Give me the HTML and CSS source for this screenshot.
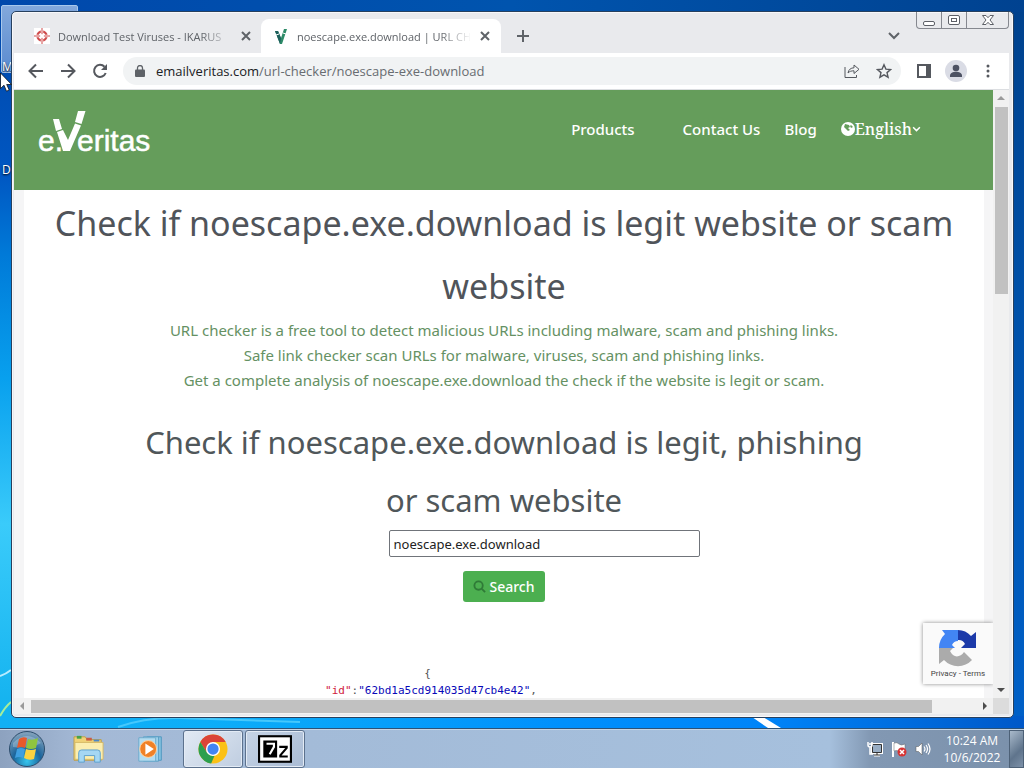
FILE: index.html
```
<!DOCTYPE html>
<html lang="en">
<head>
    <meta charset="UTF-8">
    <title>noescape.exe.download | URL Checker</title>
    <link rel="stylesheet" href="styles.css">
</head>
<body>
    <!-- Desktop -->
    <div class="desktop">
        <div class="desktop-icon"></div>
        <span class="icon-label label-m">M</span>
        <span class="icon-label label-d">D</span>
        <svg class="streaks" viewBox="0 0 1024 228" preserveAspectRatio="none" aria-hidden="true">
            <path d="M0 176Q6 174 11 170" stroke="#b8ecff" stroke-width="2" fill="none"/>
            <path d="M0 216Q5 207 11 202" stroke="#a5ee9c" stroke-width="2" fill="none"/>
            <path d="M118 227Q145 217 180 218T300 222" stroke="#46c8fc" stroke-width="2" fill="none"/>
            <path d="M752 217h11l18 11h-13z" fill="#fff"/>
        </svg>

        <!-- Browser window -->
        <div class="window">
            <div class="tab-strip">
                <div class="tab">
                    <svg class="favicon" viewBox="0 0 16 16"><rect width="16" height="16" fill="#fff"/><circle cx="8" cy="8" r="4.5" fill="none" stroke="#cf4a4a" stroke-width="2.4"/><path d="M8 0v16M0 8h16" stroke="#fff" stroke-width="2.4"/><path d="M8 0v16M0 8h16" stroke="#cf4a4a"/><circle cx="8" cy="8" r="2" fill="#fff"/></svg>
                    <span class="tab-title">Download Test Viruses - IKARUS</span>
                    <button class="close" aria-label="Close tab"><svg viewBox="0 0 10 10"><path d="M1 1l8 8M9 1l-8 8"/></svg></button>
                </div>
                <div class="tab active">
                    <svg class="favicon" viewBox="0 0 16 16"><path d="M2 3h3l3 7 3-9h3L9 16H7z" fill="#2e8b68"/><path d="M2 3h3l3 7-1 6z" fill="#1e5f5c"/><path d="M3 7l3-1M10 5l3 1" stroke="#fff"/></svg>
                    <span class="tab-title">noescape.exe.download | URL CH</span>
                    <button class="close" aria-label="Close tab"><svg viewBox="0 0 10 10"><path d="M1 1l8 8M9 1l-8 8"/></svg></button>
                </div>
                <button class="new-tab" aria-label="New tab"><svg viewBox="0 0 12 12"><path d="M6 0v12M0 6h12"/></svg></button>
                <div class="strip-right">
                    <button class="tab-search" aria-label="Search tabs"><svg viewBox="0 0 12 8"><path d="M1 1l5 5 5-5"/></svg></button>
                    <div class="window-buttons">
                        <button aria-label="Minimize"><svg viewBox="0 0 12 12"><rect x=".5" y="7.5" width="11" height="4" rx="1.5"/></svg></button>
                        <button aria-label="Maximize"><svg viewBox="0 0 12 12"><rect x=".5" y="1.5" width="11" height="9" rx="1.5"/><rect x="3.5" y="4.5" width="5" height="3"/></svg></button>
                        <button class="wide" aria-label="Close"><svg viewBox="0 0 12 12"><path d="M.5 1.5H4l2 2.2 2-2.2h3.500L8 6l3.500 4.500H8L6 8.300 4 10.500H.5L4 6z"/></svg></button>
                    </div>
                </div>
            </div>

            <div class="toolbar">
                <button class="tool" aria-label="Back"><svg viewBox="0 0 16 16"><path d="M15 8H2M8 1.500L1.500 8 8 14.500"/></svg></button>
                <button class="tool" aria-label="Forward"><svg viewBox="0 0 16 16"><path d="M1 8h13M8 1.500L14.500 8 8 14.500"/></svg></button>
                <button class="tool" aria-label="Reload"><svg viewBox="0 0 16 16"><path d="M13.700 10A6 6 0 1 1 12.500 3.800"/><path d="M15 1v6H9z" class="fill"/></svg></button>
                <div class="address">
                    <svg class="lock" viewBox="0 0 10 12"><rect y="4.500" width="10" height="7.500" rx="1"/><path d="M2.500 5V3a2.500 2.500 0 0 1 5 0v2" fill="none" stroke="#5f6368" stroke-width="1.300"/></svg>
                    <a class="url" href="#"><b>emailveritas.com</b>/url-checker/noescape-exe-download</a>
                    <button class="tool share" aria-label="Share"><svg viewBox="0 0 16 16"><path d="M1 4v10.500h11.500V12M4 10c.5-3.500 3-5.200 6-5.200V2l5 4.300-5 4.200V7.800C7.500 7.800 5.500 8.300 4 10z"/></svg></button>
                    <button class="tool star" aria-label="Bookmark"><svg viewBox="0 0 16 16"><path d="M8 1.800l1.900 4.300 4.700.4-3.600 3.100 1.100 4.600L8 11.800l-4.100 2.400L5 9.600 1.400 6.500l4.700-.4z"/></svg></button>
                </div>
                <button class="tool panel" aria-label="Side panel"><svg viewBox="0 0 16 16"><path d="M2 2h12v12H2z"/><path d="M10 2h4.500v12H10z" class="fill"/></svg></button>
                <button class="tool profile" aria-label="Profile"><svg viewBox="0 0 22 22"><circle cx="11" cy="11" r="11" fill="#dadce5"/><circle cx="11" cy="8" r="3.300" fill="#4d5263"/><path d="M5 17v-1.500c0-2.500 3-3.800 6-3.800s6 1.300 6 3.800V17z" fill="#4d5263"/></svg></button>
                <button class="tool" aria-label="Menu"><svg viewBox="0 0 16 16" class="dots"><circle cx="8" cy="3" r="1.500"/><circle cx="8" cy="8" r="1.500"/><circle cx="8" cy="13" r="1.500"/></svg></button>
            </div>

            <!-- Web page -->
            <div class="view">
                <div class="page">
                    <div class="header">
                        <a class="logo" href="#" aria-label="e.Veritas">
                            <svg viewBox="0 0 120 56">
                                <text x="0" y="41">e.</text>
                                <text x="39" y="41">eritas</text>
                                <path d="M15 9h6l3 10-6 2zM40 1h7.500l-4 13-6.500-2zM19 22l6-2 5 10 7-16.500 6 2L32 41h-7z"/>
                            </svg>
                        </a>
                        <nav class="nav">
                            <a class="products" href="#">Products</a>
                            <a href="#">Contact Us</a>
                            <a href="#">Blog</a>
                            <a class="language" href="#"><svg class="globe" viewBox="0 0 14 14"><circle cx="7" cy="7" r="7" fill="#fff"/><path d="M4 2l4 1 1 2-2 1 2 2-2 1-2-2-2-2zM10 3l2 2-2 1-1-2z" fill="#659d5b"/></svg>English<svg class="chevron" viewBox="0 0 8 6"><path d="M1 1l3 3 3-3"/></svg></a>
                        </nav>
                    </div>
                    <div class="content">
                        <h1>Check if noescape.exe.download is legit website or scam website</h1>
                        <p>URL checker is a free tool to detect malicious URLs including malware, scam and phishing links.<br>
                        Safe link checker scan URLs for malware, viruses, scam and phishing links.<br>
                        Get a complete analysis of noescape.exe.download the check if the website is legit or scam.</p>
                        <h2>Check if noescape.exe.download is legit, phishing or scam website</h2>
                        <form class="search-form">
                            <input type="text" aria-label="URL" value="noescape.exe.download">
                            <button type="button"><svg viewBox="0 0 14 14"><circle cx="6" cy="6" r="4.500"/><path d="M9.500 9.500L13 13"/></svg>Search</button>
                        </form>
                        <pre class="result">               {
<span class="key">"id"</span>:<span class="value">"62bd1a5cd914035d47cb4e42"</span>,</pre>
                    </div>
                </div>
                <div class="captcha">
                    <svg viewBox="0 0 38 38">
                        <path d="M0 19A19 19 0 0 1 6 5L3 1h16v11a7 7 0 0 0-6 4l3 3z" fill="#4285f4"/>
                        <path d="M19 1a18 18 0 0 1 13 6l5-4v16H22l4-4a7 7 0 0 0-7-4z" fill="#1c3aa9"/>
                        <path d="M0 19h14l-3 3c3 7 10 7 14 1l8 8A19 19 0 0 1 5 31l-5 4z" fill="#ababab"/>
                    </svg>
                    <span><a href="#">Privacy</a> - <a href="#">Terms</a></span>
                </div>
                <div class="scroll-y">
                    <i class="arrow up"></i>
                    <div class="thumb"></div>
                    <i class="arrow down"></i>
                </div>
                <div class="scroll-x">
                    <i class="arrow left"></i>
                    <div class="track"><div class="thumb"></div></div>
                    <i class="arrow right"></i>
                </div>
                <div class="corner"></div>
            </div>
        </div>
        <svg class="cursor" viewBox="0 0 12 19"><path d="M.5 0v15.500l3.500-3.300 2.500 6 2.700-1.200-2.500-5.500h4.800z" fill="#fff" stroke="#000" stroke-width=".7"/></svg>
    </div>

    <!-- Taskbar -->
    <div class="taskbar">
        <button class="start" aria-label="Start">
            <svg viewBox="0 0 36 36">
                <defs>
                    <radialGradient id="orb" cx=".5" cy=".85" r=".8"><stop offset="0" stop-color="#35c5ee"/><stop offset=".5" stop-color="#1b659c"/><stop offset="1" stop-color="#7e9fba"/></radialGradient>
                </defs>
                <circle cx="18" cy="18" r="17.500" fill="url(#orb)" stroke="#2d4d6c"/>
                <path d="M4 12Q18-2 32 12 22 18 4 16z" fill="#fff" opacity=".25"/>
                <path d="M10 8q4-3 8-1l-2 10q-4-2-8 0z" fill="#e8592b"/>
                <path d="M19 8q4 2 10-1l-2 10q-5 2-10 0z" fill="#8fc53f"/>
                <path d="M8 18q4-2 8 0l-2 9q-4-2-8 0z" fill="#3f9fe0"/>
                <path d="M17 18q5 2 10 0l-2 10q-5 2-10-1z" fill="#fbd341"/>
            </svg>
        </button>
        <button class="task" aria-label="Explorer">
            <svg viewBox="0 0 36 32">
                <path d="M2 3h12l2 3h15v22H2z" fill="#f0d277" stroke="#bd9d48"/>
                <path d="M5 2h5v3H5z" fill="#47a247"/><path d="M15 4h6v3h-6z" fill="#c95d43"/><path d="M23 6h6v2h-6z" fill="#4c88c8"/>
                <path d="M3 9h30v18H3z" fill="#fbeeb0" stroke="#d4b965"/>
                <path d="M7 30V20q0-3 3-3h17q3 0 3 3v10h-6v-7H13v7z" fill="#a5d7f3" stroke="#5b9fcd"/>
            </svg>
        </button>
        <button class="task" aria-label="Media Player">
            <svg viewBox="0 0 36 32">
                <path d="M14 3h15v25H14z" fill="#83c0df" stroke="#4e97c0"/><path d="M10 3h16v26H10z" fill="#9fd2eb" stroke="#5b9fc5"/><path d="M5 4h18v25H5z" fill="#b3dcf0" stroke="#6ba9cb"/>
                <circle cx="15" cy="16" r="9" fill="#f08126" stroke="#ffd5a5"/>
                <path d="M12 10l9 6-9 6z" fill="#fff"/>
            </svg>
        </button>
        <button class="task open" aria-label="Chrome">
            <svg viewBox="0 0 32 32">
                <circle cx="16" cy="16" r="15.500" fill="#fbc116"/>
                <path d="M2.500 8.500A15.500 15.500 0 0 1 29.500 8.500H16L9.500 20z" fill="#db4437"/>
                <path d="M2.500 8.500l7 11.300L16 23.500h1.500L14 31.500A15.500 15.500 0 0 1 2.500 8.500z" fill="#2c9f4f"/>
                <circle cx="16" cy="16" r="7.500" fill="#fff"/>
                <circle cx="16" cy="16" r="6" fill="#4285f4"/>
            </svg>
        </button>
        <button class="task open" aria-label="7-Zip">
            <svg viewBox="0 0 32 26">
                <rect width="32" height="26" fill="#000"/><rect x="2" y="2" width="28" height="22" fill="#fff"/>
                <rect x="5" y="5" width="13" height="16" fill="#000"/>
                <path d="M8 8h7v3l-4 7" fill="none" stroke="#fff" stroke-width="2"/>
                <path d="M20 11h7v1l-6 7v1h7" fill="none" stroke="#000" stroke-width="2"/>
            </svg>
        </button>
        <div class="tray">
            <svg viewBox="0 0 16 16"><path d="M5.500 3.500h9v8h-9zM7 14h6M10 11v3" stroke="#fff" stroke-width="3" fill="none"/><path d="M5.500 3.500h9v8h-9zM7 14h6M10 11v3" stroke="#333" fill="#98adc4"/><path d="M1 1v3q0 2 2 2t2-2V1M3 6v7h3M2 3h2" stroke="#fff" stroke-width="1.500" fill="none"/></svg>
            <svg viewBox="0 0 16 16"><path d="M2 1v15" stroke="#fff" stroke-width="2"/><path d="M3 2q3-1 5 1t6 0v7q-3 1-6 0t-5 0z" fill="#fff" stroke="#666" stroke-width=".5"/><circle cx="11" cy="11" r="4.500" fill="#d63434"/><path d="M9 9l4 4M13 9l-4 4" stroke="#fff" stroke-width="1.500"/></svg>
            <svg viewBox="0 0 16 16"><path d="M1 5.500h2.500L7 2v12l-3.500-3.500H1z" fill="#fff" stroke="#555" stroke-width=".5"/><path d="M9 5.500q2 2.500 0 5M11 4q3 4 0 8M13 2.500q4 5.500 0 11" fill="none" stroke="#fff" stroke-width="1.200"/></svg>
        </div>
        <div class="clock">10:24 AM<br>10/6/2022</div>
        <button class="show-desktop" aria-label="Show desktop"></button>
    </div>
</body>
</html>
```

FILE: styles.css
```
/* General Reset */
* {
    margin: 0;
    padding: 0;
    box-sizing: border-box;
}

body {
    height: 100vh;
    display: flex;
    flex-direction: column;
    font-family: "Noto Sans", sans-serif;
    overflow: hidden;
}

button {
    display: flex;
    align-items: center;
    justify-content: center;
    border: none;
    background: none;
    font: inherit;
}

a {
    color: inherit;
    text-decoration: none;
}

svg {
    display: block;
}

/* Desktop */
.desktop {
    position: relative;
    flex: 1;
    min-height: 0;
    padding: 11px 10px 10px 11px;
    background:
        linear-gradient(to right, #12b0f4, #0caef8 20%, #0090fc 55%, #0084f8 75%, #0058c8) bottom / 100% 12px no-repeat,
        linear-gradient(to right, #0048ac, #0054ae 50%, #004290) top / 100% 12px no-repeat,
        linear-gradient(#0046a8, #0057c2 24%, #007ad8 35%, #08a0ee 52%, #3acbfa 72%, #10b0ee) left / 50% 100% no-repeat,
        linear-gradient(#00418c, #0050a8 40%, #0060c8) right / 50% 100% no-repeat;
}

.desktop-icon {
    position: absolute;
    left: 1px;
    top: 5px;
    width: 77px;
    height: 68px;
    border: 1px solid #a8c8ec;
    border-radius: 2px;
    background: linear-gradient(#82a8dc, #5a8bd0);
}

.icon-label {
    position: absolute;
    left: 2px;
    font: 12px "Open Sans", sans-serif;
    color: #fff;
    text-shadow: 0 1px 2px #000;
}

.label-m {
    top: 58px;
}

.label-d {
    top: 161px;
}

.streaks {
    position: absolute;
    left: 0;
    bottom: 0;
    width: 100%;
    height: 228px;
}

.cursor {
    position: absolute;
    left: 0;
    top: 73px;
    width: 12px;
    height: 19px;
}

/* Browser window */
.window {
    position: relative;
    height: 100%;
    display: flex;
    flex-direction: column;
    padding: 0 4px 3px 2px;
    background: #e9eaed;
    border: 1px solid #27405e;
    border-radius: 5px;
    box-shadow: inset 0 0 0 1px #f8f8fa;
}

.tab-strip {
    display: flex;
    align-items: flex-end;
    height: 41px;
    padding-left: 7px;
}

.tab {
    display: flex;
    align-items: center;
    width: 240px;
    height: 34px;
    padding: 0 9px 0 13px;
    border-radius: 8px 8px 0 0;
    font-size: 11px;
    color: #5f6368;
}

.tab.active {
    background: #fff;
    padding: 0 10px 0 12px;
}

.favicon {
    width: 16px;
    height: 16px;
    margin-right: 8px;
    flex-shrink: 0;
}

.tab-title {
    flex: 1;
    overflow: hidden;
    white-space: nowrap;
    font-family: "Open Sans", sans-serif;
    mask-image: linear-gradient(to right, #000 82%, transparent);
}

.close {
    width: 12px;
    height: 16px;
    margin-left: 8px;
}

.close svg {
    width: 10px;
    height: 10px;
}

.close svg,
.new-tab svg,
.tab-search svg {
    fill: none;
    stroke: #5f6368;
    stroke-width: 2;
}

.new-tab {
    width: 44px;
    height: 34px;
}

.new-tab svg {
    width: 12px;
    height: 12px;
}

.strip-right {
    display: flex;
    margin-left: auto;
    align-self: stretch;
}

.tab-search {
    width: 44px;
    padding-top: 7px;
}

.tab-search svg {
    width: 12px;
    height: 8px;
}

.window-buttons {
    display: flex;
    height: 17px;
    border: 1px solid #85888f;
    border-top: none;
    border-radius: 0 0 4px 4px;
}

.window-buttons button {
    width: 25px;
    border-right: 1px solid #85888f;
}

.window-buttons .wide {
    width: 41px;
    border-right: none;
}

.window-buttons svg {
    width: 12px;
    height: 12px;
    fill: #fff;
    stroke: #5d6067;
}

/* Toolbar */
.toolbar {
    display: flex;
    align-items: center;
    height: 37px;
    padding: 0 5px 0 6px;
    background: #fff;
    border-bottom: 1px solid #dcdee1;
}

.tool {
    width: 32px;
    height: 28px;
    flex-shrink: 0;
}

.tool svg {
    width: 16px;
    height: 16px;
    fill: none;
    stroke: #55585e;
    stroke-width: 2;
}

.tool .fill {
    fill: #55585e;
    stroke: none;
}

.tool .dots {
    fill: #55585e;
    stroke: none;
}

.tool.share svg,
.tool.star svg {
    stroke-width: 1.4;
}

.tool.share svg {
    stroke-width: 1;
}

.tool.profile svg {
    width: 22px;
    height: 22px;
    stroke: none;
}

.address {
    flex: 1;
    display: flex;
    align-items: center;
    height: 28px;
    margin: 0 7px;
    padding: 0 1px 0 12px;
    border-radius: 14px;
    background: #f1f3f4;
}

.lock {
    width: 10px;
    height: 12px;
    fill: #5f6368;
}

.url {
    flex: 1;
    margin-left: 11px;
    font-family: "Open Sans", sans-serif;
    font-size: 13px;
    color: #686c71;
}

.url b {
    font-weight: normal;
    color: #202124;
}

/* Viewport and scrollbars */
.view {
    position: relative;
    flex: 1;
    min-height: 0;
    display: grid;
    grid-template-columns: 1fr 16px;
    grid-template-rows: 1fr 16px;
    background: #f1f1f1;
}

.page {
    overflow: hidden;
    background: #f5f5f6;
}

.scroll-y {
    display: flex;
    flex-direction: column;
    align-items: center;
    padding: 6px 0;
}

.scroll-y .thumb {
    width: 13px;
    height: 187px;
    margin-top: 7px;
    background: #c1c1c1;
}

.scroll-x {
    display: flex;
    align-items: center;
    padding: 0 6px;
}

.track {
    flex: 1;
    margin: 0 51px 0 7px;
}

.track .thumb {
    height: 13px;
    background: #c1c1c1;
}

.corner {
    background: #dcdcdc;
}

.arrow {
    border: 4px solid transparent;
}

.up {
    border-top: none;
    border-bottom-color: #9a9a9a;
}

.down {
    margin-top: auto;
    border-bottom: none;
    border-top-color: #4d4d4d;
}

.left {
    border-left: none;
    border-right-color: #9a9a9a;
}

.right {
    border-right: none;
    border-left-color: #4d4d4d;
}

/* Page header */
.header {
    display: flex;
    justify-content: space-between;
    align-items: flex-start;
    height: 100px;
    padding: 20px 72px 0 24px;
    background: #659d5b;
    color: #fff;
}

.logo svg {
    width: 120px;
    height: 56px;
    fill: #fff;
    font: 30px "Liberation Sans", sans-serif;
    stroke: #fff;
    stroke-width: 0.5;
}

.logo path {
    stroke: none;
}

.nav {
    display: flex;
    gap: 24px;
    padding-top: 8px;
    font-size: 15px;
    font-weight: 500;
    line-height: 22px;
}

.products {
    margin-right: 24px;
}

.language {
    display: flex;
    align-items: center;
    font-family: "Noto Serif", "DejaVu Serif", "Liberation Serif", serif;
    font-size: 16px;
}

.globe {
    width: 14px;
    height: 14px;
}

.chevron {
    width: 9px;
    height: 7px;
    fill: none;
    stroke: #fff;
    stroke-width: 1.3;
}

/* Page content */
.content {
    min-height: 100%;
    margin: 0 9px 0 10px;
    padding: 2px 30px 0;
    background: #fff;
    text-align: center;
}

h1 {
    font-size: 34px;
    font-weight: normal;
    line-height: 63px;
    color: #50545a;
}

.content p {
    font-size: 15px;
    line-height: 25px;
    color: #659163;
}

h2 {
    max-width: 740px;
    margin: 20px auto 0;
    font-size: 31px;
    font-weight: normal;
    line-height: 58px;
    color: #50575a;
}

.search-form {
    display: flex;
    flex-direction: column;
    align-items: center;
    gap: 14px;
    padding-top: 1px;
}

.search-form input {
    width: 311px;
    height: 27px;
    margin-left: 80px;
    padding: 0 4px;
    border: 1px solid #70747a;
    border-radius: 2px;
    font: 13px "Noto Sans", sans-serif;
    color: #222;
}

.search-form button {
    gap: 3px;
    height: 31px;
    padding: 0 10px;
    border-radius: 3px;
    background: #4caf50;
    font-size: 14px;
    font-weight: 500;
    color: #fff;
}

.search-form svg {
    width: 13px;
    height: 13px;
    fill: none;
    stroke: #2f7a37;
    stroke-width: 2;
}

.result {
    width: fit-content;
    margin: 63px auto 0;
    padding-right: 146px;
    font: 11px/17px "DejaVu Sans Mono", monospace;
    text-align: left;
    color: #555;
}

.key {
    color: #d0203c;
}

.value {
    color: #0808b8;
}

.captcha {
    position: absolute;
    right: 16px;
    bottom: 30px;
    width: 70px;
    height: 61px;
    display: flex;
    flex-direction: column;
    align-items: center;
    padding-top: 6px;
    background: #fafafa;
    box-shadow: 0 0 4px #888;
    clip-path: inset(-6px 0 -6px -6px);
    font: 8px/14px Roboto, sans-serif;
    color: #444;
}

.captcha svg {
    width: 38px;
    height: 38px;
}

/* Taskbar */
.taskbar {
    display: flex;
    align-items: center;
    height: 40px;
    padding-left: 9px;
    border-top: 1px solid #2c5277;
    box-shadow: inset 0 1px 0 #c5d5e6;
    background: linear-gradient(to right, #8da2bf, #a4b9d6 8%, #a3bbd8 30%, #a6c0dd 81%, #8298b3 85%, #7b91ab);
}

.start {
    width: 36px;
    margin-right: 14px;
}

.start svg {
    width: 36px;
    height: 36px;
}

.task {
    width: 60px;
    height: 38px;
    margin-right: 2px;
}

.task svg {
    width: 34px;
    height: 30px;
}

.task.open {
    border: 1px solid #5c718d;
    border-radius: 3px;
    background: linear-gradient(135deg, #e2eaf4, #bfcde0);
    box-shadow: inset 0 0 0 1px #e3ebf5;
}

.task.open + .open {
    background: linear-gradient(135deg, #c6d4e6, #a9bbd4);
}

.tray {
    display: flex;
    gap: 8px;
    margin-left: auto;
}

.tray svg {
    width: 16px;
    height: 16px;
}

.clock {
    width: 78px;
    padding-left: 4px;
    font: 12px/17px "Open Sans", sans-serif;
    text-align: center;
    color: #fff;
}

.show-desktop {
    width: 15px;
    height: 38px;
    border: 1px solid #4d6177;
    background: linear-gradient(135deg, #a9bacb, #5f748c 60%, #7d91a8);
}
```
